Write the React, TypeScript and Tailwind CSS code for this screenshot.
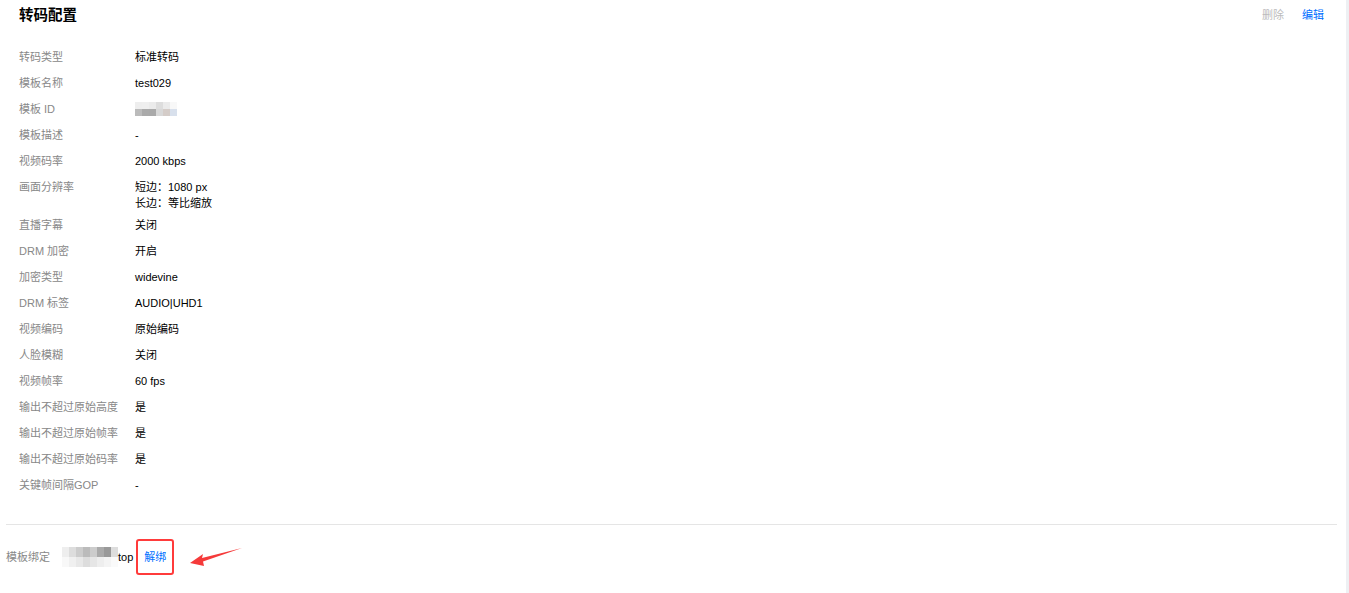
import React from 'react';

type Row = { label: string; value: string[] | 'blur' };

const rows: Row[] = [
  { label: '转码类型', value: ['标准转码'] },
  { label: '模板名称', value: ['test029'] },
  { label: '模板 ID', value: 'blur' },
  { label: '模板描述', value: ['-'] },
  { label: '视频码率', value: ['2000 kbps'] },
  { label: '画面分辨率', value: ['短边：1080 px', '长边：等比缩放'] },
  { label: '直播字幕', value: ['关闭'] },
  { label: 'DRM 加密', value: ['开启'] },
  { label: '加密类型', value: ['widevine'] },
  { label: 'DRM 标签', value: ['AUDIO|UHD1'] },
  { label: '视频编码', value: ['原始编码'] },
  { label: '人脸模糊', value: ['关闭'] },
  { label: '视频帧率', value: ['60 fps'] },
  { label: '输出不超过原始高度', value: ['是'] },
  { label: '输出不超过原始帧率', value: ['是'] },
  { label: '输出不超过原始码率', value: ['是'] },
  { label: '关键帧间隔GOP', value: ['-'] },
];

const idTop = ['#eeeeee', '#efefef', '#ebebeb', '#dddddd', '#ebebeb', '#f8f8f8'];
const idBottom = ['#bbbbbb', '#aaaaaa', '#a9a9a9', '#d8d8d8', '#d4ccc8', '#d8e0ec'];
const bindTop = ['#eeeeee', '#dddddd', '#cccccc', '#bbbbbb', '#cccccc', '#aaaaaa', '#999999', '#dddddd'];
const bindBottom = ['#f8f8f8', '#f0f0f0', '#e8e8e8', '#dddddd', '#e6e6e6', '#eeeeee', '#f4f4f4', '#fafafa'];

function Mosaic({ top, bottom, cell }: { top: string[]; bottom: string[]; cell: string }) {
  return (
    <div className="flex flex-col">
      <div className="flex">
        {top.map((c, i) => (
          <div key={i} className={cell} style={{ background: c }} />
        ))}
      </div>
      <div className="flex">
        {bottom.map((c, i) => (
          <div key={i} className={cell} style={{ background: c }} />
        ))}
      </div>
    </div>
  );
}

export default function App() {
  return (
    <div
      className="flex w-[1349px] h-[593px] bg-[#eef0f3] text-[11px] overflow-hidden"
      style={{ fontFamily: '"Liberation Sans", Arial, "Noto Sans CJK SC", sans-serif' }}
    >
      <div className="w-[1346px] h-full bg-white flex flex-col">
        {/* header */}
        <div className="flex items-center justify-between h-[30px] pl-[19px] pr-[22px]">
          <h2 className="text-[14.5px] font-bold text-black leading-none">转码配置</h2>
          <div className="flex items-center gap-[18px] text-[11px]">
            <span className="text-[#bbbbbb]">删除</span>
            <span className="text-[#006eff]">编辑</span>
          </div>
        </div>

        {/* detail list */}
        <div className="flex flex-col pl-[19px] pt-[19px]">
          {rows.map((r) => (
            <div
              key={r.label}
              className={`flex leading-[16px] ${r.value !== 'blur' && r.value.length > 1 ? 'pb-[6px]' : 'pb-[10px]'}`}
            >
              <span className="w-[116px] shrink-0 text-[#888888]">{r.label}</span>
              {r.value === 'blur' ? (
                <div className="h-[16px] flex items-center">
                  <Mosaic top={idTop} bottom={idBottom} cell="w-[7px] h-[7px]" />
                </div>
              ) : (
                <div className="flex flex-col text-black">
                  {r.value.map((v) => (
                    <span key={v}>{v}</span>
                  ))}
                </div>
              )}
            </div>
          ))}
        </div>

        {/* divider */}
        <div className="ml-[6px] w-[1331px] h-px bg-[#e5e5e5] mt-[21px]" />

        {/* binding */}
        <div className="flex items-center pl-[6px] mt-[14px] h-[36px]">
          <span className="w-[56px] text-[#888888]">模板绑定</span>
          <Mosaic top={bindTop} bottom={bindBottom} cell="w-[7px] h-[10px]" />
          <span className="text-black">top</span>
          <div className="relative ml-[3px] w-[38px] h-[36px] flex items-center justify-center">
            <span className="text-[#006eff]">解绑</span>
            <div className="absolute inset-0 border-2 border-[#ff3b3b] rounded-[3px]" />
          </div>
          <svg className="ml-[16px] mt-[2px]" width="56" height="20" viewBox="0 0 56 20">
            <path d="M0 15 L13 6 L12 10 L52 0 L13 13.5 L14 18 Z" fill="#f53a3a" />
          </svg>
        </div>
      </div>
    </div>
  );
}
